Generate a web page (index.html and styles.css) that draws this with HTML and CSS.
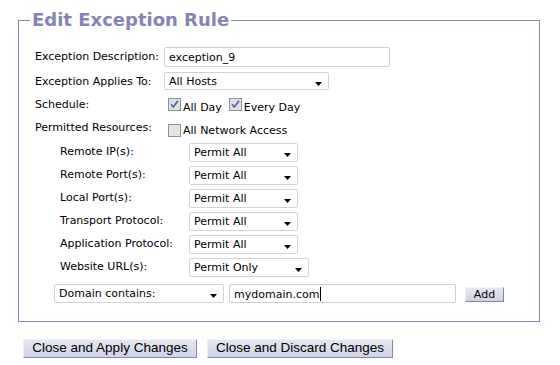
FILE: index.html
```html
<!DOCTYPE html>
<html>
<head>
<meta charset="utf-8">
<link rel="stylesheet" href="styles.css">
</head>
<body>
<fieldset class="rule">
  <legend class="rule-title">Edit Exception Rule</legend>

  <div class="row row-desc">
    <span class="lbl">Exception Description:</span>
    <div class="textbox tb-desc">exception_9</div>
  </div>

  <div class="row row-hosts">
    <span class="lbl">Exception Applies To:</span>
    <div class="select sel-hosts"><span class="sel-text">All Hosts</span><svg class="arrow" width="7" height="4" viewBox="0 0 7 4"><path d="M0 0H7L3.5 4Z" fill="#000"/></svg></div>
  </div>

  <div class="row row-sched">
    <span class="lbl">Schedule:</span>
    <span class="check"><svg class="cb" width="13" height="13" viewBox="0 0 13 13"><rect x="0.5" y="0.5" width="12" height="12" fill="#e6e6ec" stroke="#8e8f8f"/><rect x="1.5" y="1.5" width="10" height="10" fill="#dcdde3"/><path d="M3 6.2L5.3 9L10 2.8" fill="none" stroke="#4d63a6" stroke-width="1.6"/></svg><span class="ck-text">All Day</span></span>
    <span class="check"><svg class="cb" width="13" height="13" viewBox="0 0 13 13"><rect x="0.5" y="0.5" width="12" height="12" fill="#e6e6ec" stroke="#8e8f8f"/><rect x="1.5" y="1.5" width="10" height="10" fill="#dcdde3"/><path d="M3 6.2L5.3 9L10 2.8" fill="none" stroke="#4d63a6" stroke-width="1.6"/></svg><span class="ck-text">Every Day</span></span>
  </div>

  <div class="row row-perm">
    <span class="lbl">Permitted Resources:</span>
    <span class="check"><svg class="cb" width="13" height="13" viewBox="0 0 13 13"><rect x="0.5" y="0.5" width="12" height="12" fill="#ececef" stroke="#8e8f8f"/><rect x="1.5" y="1.5" width="10" height="10" fill="#e2e2e6"/></svg><span class="ck-text">All Network Access</span></span>
  </div>

  <div class="row sub">
    <span class="lbl sub-lbl">Remote IP(s):</span>
    <div class="select sel-sub"><span class="sel-text">Permit All</span><svg class="arrow" width="7" height="4" viewBox="0 0 7 4"><path d="M0 0H7L3.5 4Z" fill="#000"/></svg></div>
  </div>
  <div class="row sub">
    <span class="lbl sub-lbl">Remote Port(s):</span>
    <div class="select sel-sub"><span class="sel-text">Permit All</span><svg class="arrow" width="7" height="4" viewBox="0 0 7 4"><path d="M0 0H7L3.5 4Z" fill="#000"/></svg></div>
  </div>
  <div class="row sub">
    <span class="lbl sub-lbl">Local Port(s):</span>
    <div class="select sel-sub"><span class="sel-text">Permit All</span><svg class="arrow" width="7" height="4" viewBox="0 0 7 4"><path d="M0 0H7L3.5 4Z" fill="#000"/></svg></div>
  </div>
  <div class="row sub">
    <span class="lbl sub-lbl">Transport Protocol:</span>
    <div class="select sel-sub"><span class="sel-text">Permit All</span><svg class="arrow" width="7" height="4" viewBox="0 0 7 4"><path d="M0 0H7L3.5 4Z" fill="#000"/></svg></div>
  </div>
  <div class="row sub">
    <span class="lbl sub-lbl">Application Protocol:</span>
    <div class="select sel-sub"><span class="sel-text">Permit All</span><svg class="arrow" width="7" height="4" viewBox="0 0 7 4"><path d="M0 0H7L3.5 4Z" fill="#000"/></svg></div>
  </div>
  <div class="row sub">
    <span class="lbl sub-lbl">Website URL(s):</span>
    <div class="select sel-url"><span class="sel-text">Permit Only</span><svg class="arrow" width="7" height="4" viewBox="0 0 7 4"><path d="M0 0H7L3.5 4Z" fill="#000"/></svg></div>
  </div>

  <div class="row row-domain">
    <div class="select sel-domain"><span class="sel-text">Domain contains:</span><svg class="arrow" width="7" height="4" viewBox="0 0 7 4"><path d="M0 0H7L3.5 4Z" fill="#000"/></svg></div>
    <div class="textbox tb-domain">mydomain.com<span class="caret"></span></div>
    <button class="btn btn-add">Add</button>
  </div>
</fieldset>

<div class="actions">
  <button class="btn btn-big btn-apply">Close and Apply Changes</button>
  <button class="btn btn-big btn-discard">Close and Discard Changes</button>
</div>
</body>
</html>
```

FILE: styles.css
```css
html, body {
  margin: 0;
  padding: 0;
  background: #ffffff;
}

body {
  font-family: "DejaVu Sans", Verdana, sans-serif;
  font-size: 11px;
  line-height: 13px;
  color: #000;
  padding-top: 8px;
}

.rule {
  box-sizing: border-box;
  width: 522px;
  margin: 0 0 0 18px;
  padding: 0 0 18px 16px;
  border: 1px solid #8788b8;
  min-inline-size: 0;
}

.rule-title {
  margin-left: -5px;
  padding: 0 2px;
  font-family: "DejaVu Sans", Verdana, sans-serif;
  font-weight: bold;
  font-size: 18px;
  line-height: 24px;
  color: #8485b4;
}

.row {
  display: flex;
  align-items: flex-start;
}

.lbl {
  width: 129px;
  flex: none;
  white-space: nowrap;
}

.row-desc { margin-top: 15px; height: 20px; }
.row-desc .lbl { padding-top: 3px; }
.row-hosts { margin-top: 5px; height: 18px; }
.row-hosts .lbl { padding-top: 3px; }
.row-sched { margin-top: 7px; height: 14px; }
.row-sched .lbl { padding-top: 1px; }
.row-perm { margin-top: 10px; height: 15px; }
.row-perm .lbl { padding-top: 0; }

.sub { margin-top: 5px; height: 18px; padding-left: 25px; }
.row-perm + .sub { margin-top: 7px; }
.sub-lbl { width: 129px; padding-top: 2px; }

.row-domain { margin-top: 8px; height: 19px; padding-left: 19px; }

.textbox {
  box-sizing: border-box;
  border: 1px solid #cfcfcf;
  border-radius: 2px;
  padding: 3px 0 0 4px;
  font-size: 11px;
  line-height: 13px;
  background: #fff;
  white-space: nowrap;
}
.tb-desc { width: 226px; height: 20px; }
.tb-domain { width: 227px; height: 19px; margin-left: 5px; padding-top: 2px; }

.caret {
  display: inline-block;
  width: 1px;
  height: 14px;
  background: #000;
  vertical-align: -3px;
  margin-left: 1px;
}

.select {
  box-sizing: border-box;
  display: flex;
  align-items: flex-start;
  justify-content: space-between;
  border: 1px solid #d3d3d3;
  border-radius: 2px;
  background: #fff;
  height: 18px;
  padding: 2px 6px 0 4px;
  white-space: nowrap;
}
.select .arrow { margin-top: 7px; }
.sel-hosts { width: 165px; }
.sel-sub { width: 109px; height: 19px; }
.sel-url { width: 120px; height: 19px; }
.sel-domain { width: 170px; height: 19px; }

.check {
  display: flex;
  align-items: flex-start;
  margin-left: 4px;
  margin-right: 3px;
}
.cb { flex: none; }
.row-sched .cb { margin-top: 1px; }
.row-sched .ck-text { padding-top: 4px; }
.row-perm .cb { margin-top: 3px; }
.row-perm .ck-text { padding-top: 3px; }
.ck-text { margin-left: 2px; white-space: nowrap; }

.btn {
  box-sizing: border-box;
  border: 1px solid;
  border-color: #f2f3f8 #8486a8 #8486a8 #eef0f6;
  background: linear-gradient(#e4e6f1, #cfd3e4);
  color: #000;
  padding: 0;
  margin: 0;
  cursor: default;
}

.btn-add {
  width: 39px;
  height: 15px;
  margin-left: 9px;
  margin-top: 3px;
  font-family: "DejaVu Sans", Verdana, sans-serif;
  font-size: 11px;
  line-height: 12px;
}

.actions {
  display: flex;
  gap: 10px;
  margin: 17px 0 0 23px;
}

.btn-big {
  height: 19px;
  padding-bottom: 2px;
  font-family: "Liberation Sans", Arial, sans-serif;
  font-size: 13.5px;
  line-height: 15px;
}
.btn-apply { width: 174px; }
.btn-discard { width: 186px; }
```
